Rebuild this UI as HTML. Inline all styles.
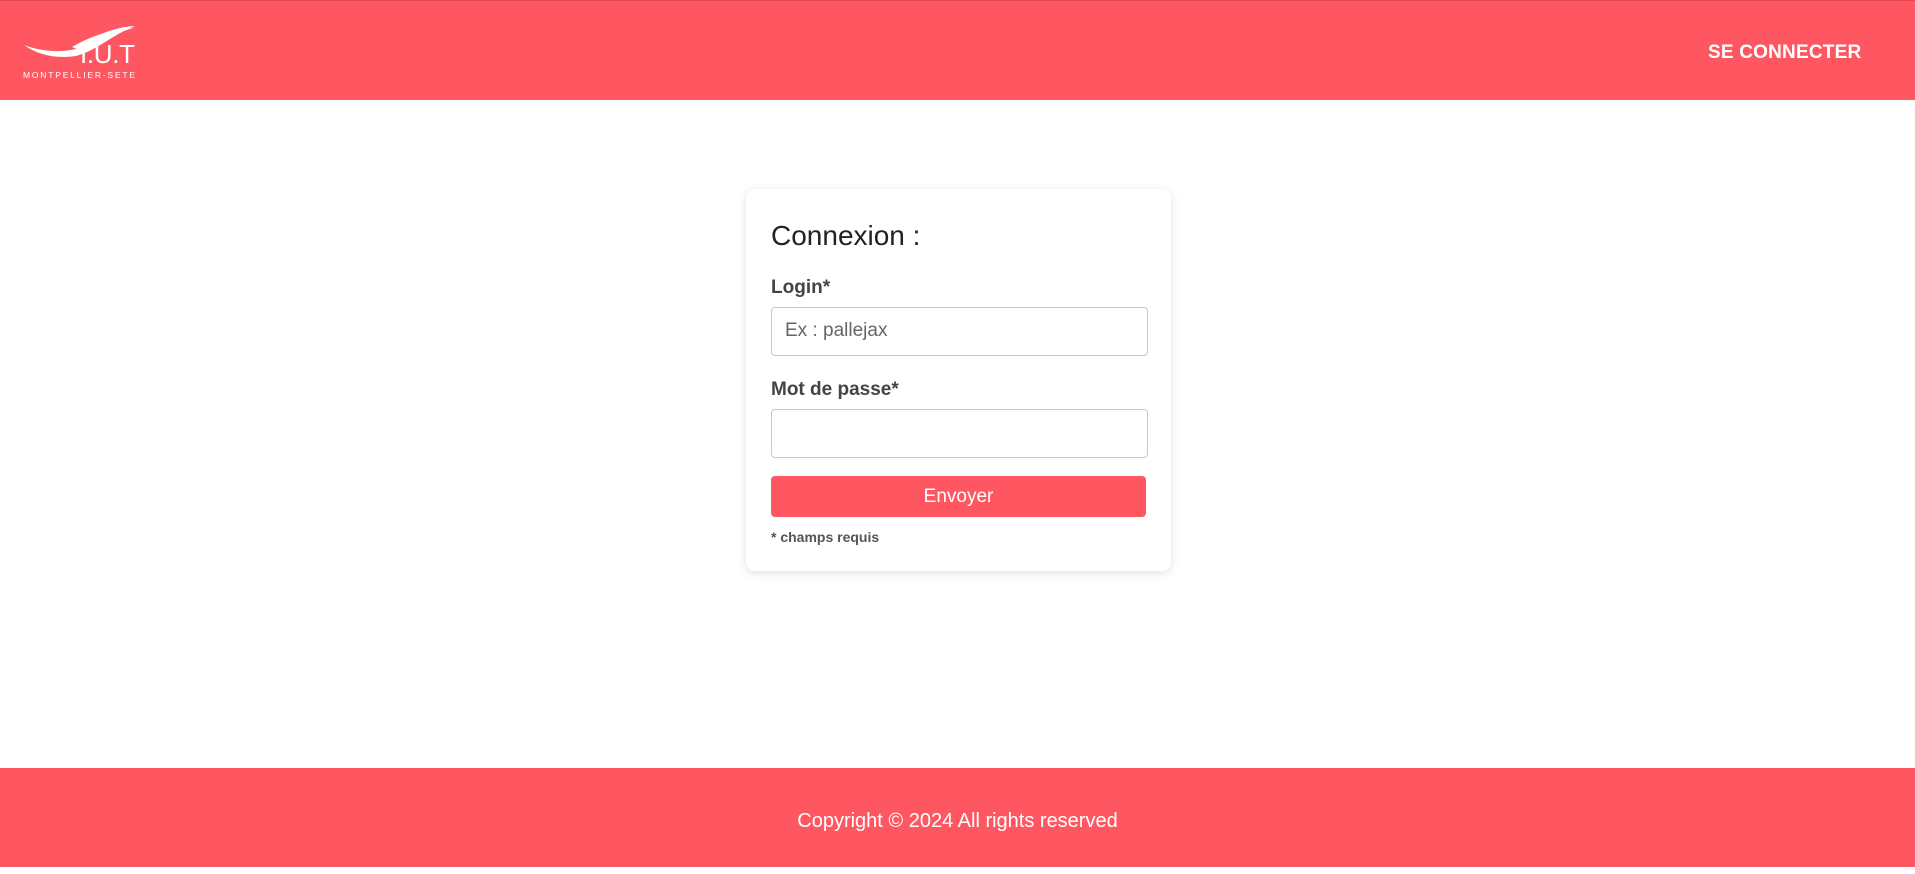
<!DOCTYPE html>
<html><head><meta charset="utf-8"><style>
*{box-sizing:border-box;margin:0;padding:0}
html,body{width:1915px;height:867px;overflow:hidden;background:#fff;font-family:"Liberation Sans",sans-serif}
header{position:absolute;left:0;top:0;width:1915px;height:100px;background:#ff5761;border-top:1px solid #e04850}
.nav{position:absolute;left:1708px;top:41px;color:#fff;font-weight:bold;font-size:19px;letter-spacing:0.2px}
footer{position:absolute;left:0;top:768px;width:1915px;height:99px;background:#ff5761;color:#fff;font-size:20px;text-align:center;line-height:106px}
.card{position:absolute;left:746px;top:189px;width:425px;height:382px;background:#fff;border-radius:9px;box-shadow:0 2px 10px rgba(0,0,0,0.12)}
h1{position:absolute;left:25px;top:31px;font-weight:normal;font-size:28px;color:#222}
.lbl{position:absolute;left:25px;font-weight:bold;font-size:19px;color:#444}
.in{position:absolute;left:25px;width:377px;height:49px;border:1px solid #c8c8c8;border-radius:4px}
.ph{position:absolute;left:13px;top:12px;font-size:19px;color:#666}
.btn{position:absolute;left:25px;top:287px;width:375px;height:41px;background:#ff5761;border-radius:4px;color:#fff;font-size:19px;text-align:center;line-height:41px}
.req{position:absolute;left:25px;top:340px;font-size:14px;font-weight:bold;color:#555}
</style></head><body>
<header>
<svg style="position:absolute;left:0;top:0" width="200" height="100" viewBox="0 0 200 100">
<path d="M24 44 C38 54 56 58 76 55 C96 50 112 34 135 25 C112 26 92 36 76 48 C58 52 40 50 24 44Z" fill="#fff"/>
<path d="M72 46 C92 34 114 28 134 27 C114 32 96 40 82 50Z" fill="#fff"/>
<text x="80" y="62" fill="#fff" font-family="Liberation Sans" font-size="26" textLength="55">I.U.T</text>
<text x="23" y="77" fill="#fff" font-family="Liberation Sans" font-size="8.5" textLength="112">MONTPELLIER-SETE</text>
</svg>
<div class="nav">SE CONNECTER</div>
</header>
<div class="card">
<h1>Connexion :</h1>
<div class="lbl" style="top:88px">Login*</div>
<div class="in" style="top:118px"><span class="ph">Ex : pallejax</span></div>
<div class="lbl" style="top:190px">Mot de passe*</div>
<div class="in" style="top:220px"></div>
<div class="btn">Envoyer</div>
<div class="req">* champs requis</div>
</div>
<footer>Copyright © 2024 All rights reserved</footer>
</body></html>
